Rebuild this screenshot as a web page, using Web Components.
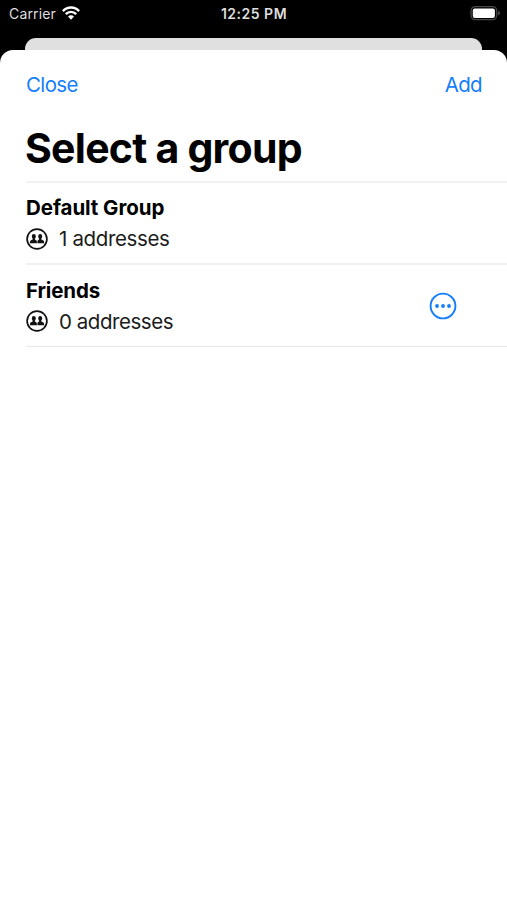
<!DOCTYPE html>
<html lang="en">
<head>
<meta charset="utf-8">
<title>Select a group</title>
<style>
html,body{margin:0;height:100%;background:#000}
body{font-family:Inter,"Liberation Sans",sans-serif;overflow:hidden}
</style>
</head>
<body>
<phone-screen>
  <status-bar slot="status" carrier="Carrier" time="12:25 PM"></status-bar>
  <modal-sheet>
    <text-button slot="left">Close</text-button>
    <text-button slot="right">Add</text-button>
    <span slot="title">Select a group</span>
    <group-row name="Default Group" style="--name-spacing:-.07px;--count-spacing:-.36px">1 addresses</group-row>
    <group-row name="Friends" style="--name-spacing:-.15px;--count-spacing:-.46px">0 addresses<more-button slot="action"></more-button></group-row>
  </modal-sheet>
</phone-screen>
<script>
function define(name, markup, setup) {
  customElements.define(name, class extends HTMLElement {
    constructor() {
      super();
      this.attachShadow({ mode: 'open' }).innerHTML = markup;
    }
    connectedCallback() { if (setup) setup(this, this.shadowRoot); }
  });
}

define('phone-screen', `
<style>
:host{display:flex;flex-direction:column;height:900px;width:507px;background:#000}
.behind{height:12px;margin:0 25px;background:#e0e0e0;border-radius:11px 11px 0 0;flex:none}
</style>
<slot name="status"></slot><div class="behind"></div><slot></slot>`);

define('status-bar', `
<style>
:host{display:grid;grid-template-columns:1fr auto 1fr;height:38px;flex:none;color:#dedede;line-height:28px;box-sizing:border-box;padding:0 6px 0 9px}
.left{display:flex;height:28px;gap:6px;font-size:14px;letter-spacing:.15px}
.time{font-size:14px;font-weight:600;letter-spacing:.5px;height:28px;margin-right:2px}
.wifi{margin-top:6px}
.battery{justify-self:end;margin-top:5px}
</style>
<div class="left"><span class="carrier"></span>
<svg class="wifi" width="18" height="14" viewBox="0 0 18 14" fill="none" stroke="#fff" stroke-width="2.4"><path d="M.9 5.1C5.4.3 12.6.3 17.1 5.1M3.8 8.1C6.7 5.1 11.3 5.1 14.2 8.1"/><path d="M9 13.7 6 10.6C7.6 8.9 10.4 8.9 12 10.6Z" fill="#fff" stroke="none"/></svg></div>
<div class="time"></div>
<svg class="battery" width="31" height="16" viewBox="0 0 31 16"><rect x="1.1" y="1.6" width="25.6" height="13" rx="4" fill="none" stroke="#484848" stroke-width="1.3"/><rect x="2.8" y="3.4" width="22.1" height="9.5" rx="2" fill="#fff"/><path d="M28.2 5.8Q30 6.5 30 8.1T28.2 10.4Z" fill="#555"/></svg>`,
(host, root) => {
  root.querySelector('.carrier').textContent = host.getAttribute('carrier');
  root.querySelector('.time').textContent = host.getAttribute('time');
});

define('modal-sheet', `
<style>
:host{display:block;flex:1;background:#fff;border-radius:13px 13px 0 0;color:#000}
nav{display:flex;justify-content:space-between;padding:20px 25px 0 26px;height:30px}
h1{margin:22px 0 0;padding:0 0 0 25px;height:59px;box-sizing:border-box;font-size:41px;line-height:52px;font-weight:700;letter-spacing:-.75px;white-space:nowrap}
.list{margin-left:26px;border-top:2px solid #f1f1f1}
</style>
<nav><slot name="left"></slot><slot name="right"></slot></nav>
<h1><slot name="title"></slot></h1>
<div class="list"><slot></slot></div>`);

define('text-button', `
<style>:host{display:block;color:#147efb;font-size:20.5px;line-height:30px;letter-spacing:-.65px}</style><slot></slot>`);

define('group-row', `
<style>
:host{display:flex;justify-content:space-between;align-items:center;height:82px;box-sizing:border-box;border-bottom:2px solid #f1f1f1;padding-right:50px}
:host(:last-of-type){height:83px;border-bottom:1px solid #e8e8e8;padding-bottom:1px;height:82px;padding-top:1px}
.name{font-size:20.5px;font-weight:700;line-height:31px;letter-spacing:var(--name-spacing)}
.meta{display:flex;align-items:center;gap:11px;font-size:20.5px;line-height:31px;color:#1b1b1b;letter-spacing:var(--count-spacing)}
</style>
<div><div class="name"></div>
<div class="meta"><svg width="22" height="22" viewBox="0 0 22 22"><circle cx="11" cy="11" r="9.9" fill="none" stroke="#111" stroke-width="1.7"/><g fill="#111"><ellipse cx="7.8" cy="8.4" rx="2" ry="2.3"/><ellipse cx="14.2" cy="8.4" rx="2" ry="2.3"/><path d="M4 15.3v-1.3c0-1.3 1-1.7 2.7-2.4v-1.5h2.2v1.5c1.4.6 2 1.1 2 2.4v1.3ZM11.4 15.3v-1.3c0-1.2.3-1.8 1.7-2.4v-1.5h2.2v1.5c1.7.7 2.8 1.1 2.8 2.4v1.3Z"/></g></svg><span><slot></slot></span></div></div>
<slot name="action"></slot>`,
(host, root) => { root.querySelector('.name').textContent = host.getAttribute('name'); });

define('more-button', `
<style>:host{display:block;height:28px}svg{display:block}</style>
<svg width="28" height="28" viewBox="0 0 28 28"><circle cx="14" cy="14" r="12.4" fill="none" stroke="#147efb" stroke-width="1.9"/><g fill="#147efb"><circle cx="8" cy="14" r="1.9"/><circle cx="14" cy="14" r="1.9"/><circle cx="20" cy="14" r="1.9"/></g></svg>`);
</script>
</body>
</html>
